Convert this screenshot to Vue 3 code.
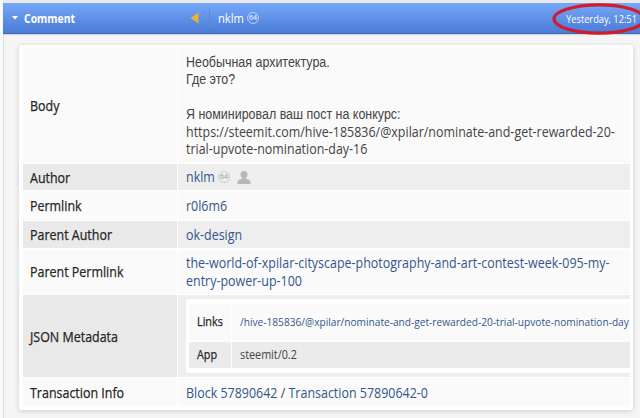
<template>
  <div class="operation">
    <header class="operation-header">
      <svg class="caret" width="6" height="4" viewBox="0 0 6 4"><path d="M0 0h6L3 3.5z" fill="#fff" /></svg>
      <span class="title">Comment</span>
      <svg class="arrow" width="9" height="12" viewBox="0 0 9 12"><path d="M8.5 0.5v11L0.5 6z" fill="#e6b534" /></svg>
      <span class="separator"></span>
      <span class="user">nklm</span>
      <span class="reputation light">64</span>
      <span class="time">Yesterday, 12:51</span>
    </header>

    <div class="card">
      <div v-for="row in rows" :key="row.type" class="row" :class="row.type">
        <div class="label"><span class="narrow">{{ row.label }}</span></div>
        <div class="value">
          <div v-if="row.type === 'body'" class="narrow">
            <p class="ru">Необычная архитектура.</p>
            <p class="ru">Где это?</p>
            <p>&nbsp;</p>
            <p class="ru">Я номинировал ваш пост на конкурс:</p>
            <p>https://steemit.com/hive-185836/@xpilar/nominate-and-get-rewarded-20-</p>
            <p>trial-upvote-nomination-day-16</p>
          </div>
          <template v-else-if="row.type === 'author'">
            <a class="narrow author-name">nklm</a>
            <span class="reputation">64</span>
            <svg class="person" width="14" height="13" viewBox="0 0 14 13">
              <path d="M7 0C4.800 0 3.500 1.500 3.500 3.500c0 1.700.7 2.900 1.700 3.600v.6C2.300 8.300.5 9.100.5 11v2h13v-2c0-1.900-1.800-2.700-4.700-3.300v-.6c1-.7 1.700-1.900 1.700-3.600C10.500 1.500 9.200 0 7 0z" fill="#b3b8bc" />
            </svg>
          </template>
          <div v-else-if="row.type === 'metadata'" class="meta">
            <div class="meta-row links">
              <div class="meta-label"><span>Links</span></div>
              <div class="meta-value"><a>/hive-185836/@xpilar/nominate-and-get-rewarded-20-trial-upvote-nomination-day</a></div>
            </div>
            <div class="meta-row app">
              <div class="meta-label"><span>App</span></div>
              <div class="meta-value"><span>steemit/0.2</span></div>
            </div>
          </div>
          <div v-else-if="row.type === 'transaction'" class="narrow"><a>Block 57890642</a> / <a>Transaction 57890642-0</a></div>
          <div v-else class="narrow">
            <p v-for="line in row.lines" :key="line"><a>{{ line }}</a></p>
          </div>
        </div>
      </div>
    </div>

    <svg class="highlight" width="94" height="34" viewBox="0 0 94 34">
      <ellipse cx="47" cy="17" rx="45" ry="14.200" fill="none" stroke="#d01c2b" stroke-width="3.3" />
    </svg>
  </div>
</template>

<script setup>
const rows = [
  { type: "body", label: "Body" },
  { type: "author", label: "Author" },
  { type: "permlink", label: "Permlink", lines: ["r0l6m6"] },
  { type: "parent-author", label: "Parent Author", lines: ["ok-design"] },
  {
    type: "parent-permlink",
    label: "Parent Permlink",
    lines: ["the-world-of-xpilar-cityscape-photography-and-art-contest-week-095-my-", "entry-power-up-100"],
  },
  { type: "metadata", label: "JSON Metadata" },
  { type: "transaction", label: "Transaction Info" },
];
</script>

<style>
body {
  background: #f5f5f5;
  overflow: hidden;
}
</style>

<style scoped>
.operation {
  position: relative;
  box-sizing: border-box;
  width: 640px;
  height: 418px;
  padding: 3px 0 0 3px;
  overflow: hidden;
  background: linear-gradient(90deg, #fafafa 3px, #dedede 3px, #dedede 4px, #f5f5f5 4px);
  font-family: "Open Sans", sans-serif;
  font-size: 14px;
  color: #444;
}
.operation-header {
  display: flex;
  align-items: center;
  box-sizing: border-box;
  height: 31px;
  padding-left: 9px;
  border-bottom: 1px solid #4268b0;
  background: linear-gradient(#76a8f9, #4a7bd6);
  box-shadow: 0 -3px 0 #e9e9ec, 0 1px 1px #d4d8df;
  color: #fff;
}
.title {
  width: 158px;
  margin-left: 6px;
  font-size: 13px;
  font-weight: 700;
  transform: scaleX(0.8);
  transform-origin: left center;
}
.arrow {
  margin-left: 8px;
}
.separator {
  width: 1px;
  height: 18px;
  margin: 0 8px 0 10px;
  background: #6689c6;
}
.user {
  width: 25px;
  font-size: 13px;
  transform: scaleX(0.86);
  transform-origin: left center;
}
.reputation {
  display: flex;
  align-items: center;
  justify-content: center;
  box-sizing: border-box;
  width: 12px;
  height: 12px;
  margin-left: 4px;
  border: 1px solid #cdcdcd;
  border-radius: 50%;
  font-size: 7px;
  line-height: 10px;
  color: #999;
}
.reputation.light {
  border-color: #b8cff7;
  color: #fff;
}
.time {
  margin-left: auto;
  padding-right: 4px;
  font-size: 11px;
  white-space: nowrap;
  transform: scaleX(0.84);
  transform-origin: right center;
}
.card {
  box-sizing: border-box;
  width: 614px;
  height: 365px;
  margin: 11px 0 0 16px;
  padding: 3px 3px 0 4px;
  border-radius: 2px;
  background: #fff;
  box-shadow: 0 1px 5px rgba(0, 0, 0, 0.17);
}
.row {
  display: grid;
  grid-template-columns: 154px 452px;
  column-gap: 1px;
  margin-bottom: 1px;
}
.row > div {
  display: flex;
  align-items: center;
  overflow: hidden;
  background: #fafafa;
}
.row:nth-child(even) > .label {
  background: #e9e9e9;
}
.row:nth-child(even) > .value {
  background: #eeeeee;
}
.row > .label {
  padding-left: 7px;
  color: #252525;
  -webkit-text-stroke: 0.25px #252525;
  white-space: nowrap;
}
.row > .value {
  padding-left: 8px;
  line-height: 17.3px;
  white-space: nowrap;
}
.narrow {
  flex: none;
  transform: scaleX(0.89);
  transform-origin: left center;
}
.author-name {
  width: 28px;
}
.body {
  height: 115px;
}
.author {
  height: 26px;
}
.permlink {
  height: 29px;
}
.parent-author {
  height: 27px;
}
.parent-permlink {
  height: 45px;
}
.metadata {
  height: 82px;
}
.transaction {
  height: 29px;
}
p {
  margin: 0;
}
a {
  color: #34568b;
}
.ru {
  font-family: "Liberation Sans", sans-serif;
}
.person {
  margin-left: 7px;
}
.meta {
  flex: none;
  box-sizing: border-box;
  width: 460px;
  height: 74px;
  padding: 4px 0 0 3px;
  border-radius: 2px;
  background: #fff;
}
.meta-row {
  display: grid;
  grid-template-columns: 42px 420px;
  column-gap: 1px;
  margin-bottom: 1px;
}
.meta-row > div {
  display: flex;
  align-items: center;
  background: #fafafa;
}
.meta-row.app > div {
  background: #ebebeb;
}
.links {
  height: 38px;
}
.app {
  height: 26px;
}
.meta-label {
  padding-left: 8px;
  font-size: 12px;
  color: #252525;
  -webkit-text-stroke: 0.25px #252525;
}
.meta-value {
  padding-left: 8px;
  font-size: 12px;
}
.meta-label span,
.meta-value span {
  transform: scaleX(0.9);
  transform-origin: left center;
}
.links .meta-value a {
  font-size: 11px;
  transform: scaleX(0.922);
  transform-origin: left center;
}
.highlight {
  position: absolute;
  top: 2px;
  left: 552px;
}
</style>
